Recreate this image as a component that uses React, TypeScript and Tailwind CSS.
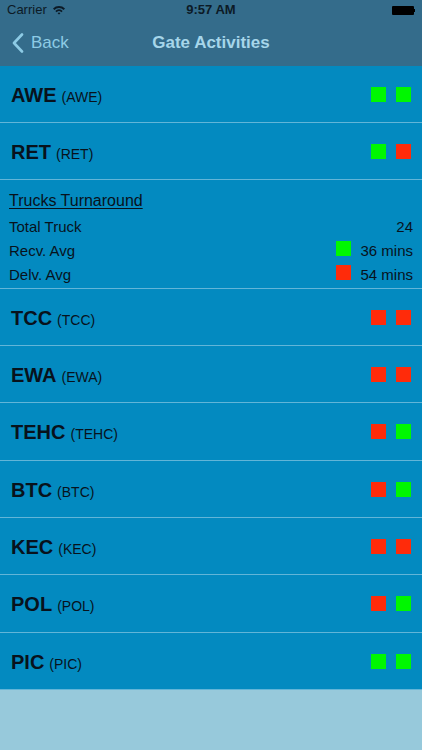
const GREEN = "bg-[#00f700]";
const RED = "bg-[#ff2b0a]";

type Gate = { name: string; a: boolean; b: boolean };

const topGates: Gate[] = [
  { name: "AWE", a: true, b: true },
  { name: "RET", a: true, b: false },
];

const bottomGates: Gate[] = [
  { name: "TCC", a: false, b: false },
  { name: "EWA", a: false, b: false },
  { name: "TEHC", a: false, b: true },
  { name: "BTC", a: false, b: true },
  { name: "KEC", a: false, b: false },
  { name: "POL", a: false, b: true },
  { name: "PIC", a: true, b: true },
];

const Square = ({ ok }: { ok: boolean }) => (
  <span className={`block w-[15px] h-[15px] ${ok ? GREEN : RED}`} />
);

const GateRow = ({ gate, tall }: { gate: Gate; tall?: boolean }) => (
  <div
    className={`${tall ? "h-[58px]" : "h-[57px]"} flex items-center justify-between px-[11px] border-b border-[#62b5d8]`}
  >
    <div className="flex items-baseline gap-[5px] text-[#08121c] pt-[1px]">
      <span className="text-[20px] font-bold leading-none">{gate.name}</span>
      <span className="text-[14px] leading-none">({gate.name})</span>
    </div>
    <div className="flex gap-[10px]">
      <Square ok={gate.a} />
      <Square ok={gate.b} />
    </div>
  </div>
);

export default function App() {
  return (
    <div className="w-[422px] h-[750px] flex flex-col bg-[#97c9db] font-['Helvetica','Liberation_Sans',Arial,sans-serif]">
      {/* header start */}
      <div className="bg-[#346c8b]">
        <div className="h-[20px] relative flex items-center px-[7px] text-[13px] text-[#0c1a26]">
          <span>Carrier</span>
          <svg width="14" height="10" viewBox="0 0 14 10" className="ml-[5px]">
            <path d="M1 3.6 A8.5 8.5 0 0 1 13 3.6 L11.6 5 A6.5 6.5 0 0 0 2.4 5 Z" fill="#0c1a26" />
            <path d="M3.3 5.9 A5.2 5.2 0 0 1 10.7 5.9 L9.3 7.3 A3.2 3.2 0 0 0 4.7 7.3 Z" fill="#0c1a26" />
            <path d="M5.6 8.2 A2 2 0 0 1 8.4 8.2 L7 9.6 Z" fill="#0c1a26" />
          </svg>
          <span className="absolute left-0 right-0 text-center font-semibold">9:57 AM</span>
          <div className="ml-auto flex items-center">
            <span className="block w-[22px] h-[9px] bg-black rounded-[1px]" />
            <span className="block w-[1.5px] h-[3px] bg-black" />
          </div>
        </div>
        <div className="h-[46px] relative flex items-center">
          <div className="flex items-center pl-[12px] text-[#8dcbe5] text-[17px]">
            <svg width="12" height="20" viewBox="0 0 12 20">
              <path d="M10 1.5 L2 10 L10 18.5" fill="none" stroke="#8dcbe5" strokeWidth="2.6" strokeLinecap="round" strokeLinejoin="round" />
            </svg>
            <span className="ml-[7px]">Back</span>
          </div>
          <span className="absolute left-0 right-0 text-center text-[17px] font-semibold text-[#a6d6ea] pointer-events-none">
            Gate Activities
          </span>
        </div>
      </div>
      {/* header end */}

      {/* list start */}
      <div className="bg-[#038ac0]">
        {topGates.map((g) => (
          <GateRow key={g.name} gate={g} />
        ))}

        <div className="h-[109px] px-[9px] pt-[10px] text-[15px] text-[#08121c] border-b border-[#62b5d8]">
          <div className="text-[16px] underline underline-offset-2 leading-[22px]">Trucks Turnaround</div>
          <div className="flex justify-between leading-[24px] mt-[3px]">
            <span>Total Truck</span>
            <span>24</span>
          </div>
          <div className="flex justify-between items-center leading-[24px]">
            <span>Recv. Avg</span>
            <div className="flex items-center gap-[9px]">
              <span className={`block w-[15px] h-[15px] -mt-[6px] ${GREEN}`} />
              <span>36 mins</span>
            </div>
          </div>
          <div className="flex justify-between items-center leading-[24px]">
            <span>Delv. Avg</span>
            <div className="flex items-center gap-[9px]">
              <span className={`block w-[15px] h-[15px] -mt-[6px] ${RED}`} />
              <span>54 mins</span>
            </div>
          </div>
        </div>

        {bottomGates.map((g, i) => (
          <GateRow key={g.name} gate={g} tall={i === 2 || i === 5} />
        ))}
      </div>
      {/* list end */}
    </div>
  );
}
